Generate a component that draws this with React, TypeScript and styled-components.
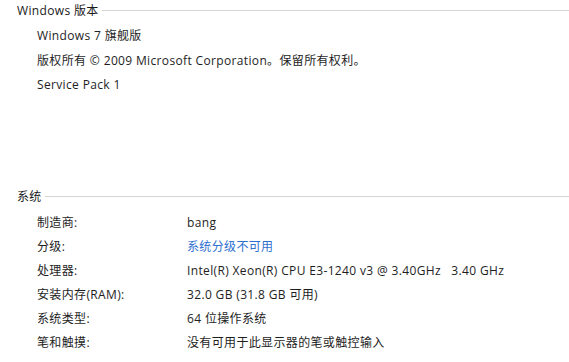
import styled, { createGlobalStyle } from "styled-components";

const Global = createGlobalStyle`
  body {
    margin: 0;
    background: #ffffff;
    font-family: "Open Sans", "Noto Sans CJK SC", sans-serif;
    font-size: 12px;
    letter-spacing: 0.35px;
    color: #1e1e1e;
  }
`;

type Item = { label?: string; value: string; link?: boolean };

const version: Item[] = [
  { value: "Windows 7 旗舰版" },
  { value: "版权所有 © 2009 Microsoft Corporation。保留所有权利。" },
  { value: "Service Pack 1" },
];

const system: Item[] = [
  { label: "制造商:", value: "bang" },
  { label: "分级:", value: "系统分级不可用", link: true },
  { label: "处理器:", value: "Intel(R) Xeon(R) CPU E3-1240 v3 @ 3.40GHz\u00a0\u00a0\u00a03.40 GHz" },
  { label: "安装内存(RAM):", value: "32.0 GB (31.8 GB 可用)" },
  { label: "系统类型:", value: "64 位操作系统" },
  { label: "笔和触摸:", value: "没有可用于此显示器的笔或触控输入" },
];

export default function App() {
  return (
    <>
      <Global />
      <Page>
        <Section>
          <Header>
            <Title>Windows 版本</Title>
            <Rule />
          </Header>
          <Rows $gap={0}>
            {version.map((it) => (
              <Row key={it.value} $h={25}>
                <Value>{it.value}</Value>
              </Row>
            ))}
          </Rows>
        </Section>
        <Section $top={89}>
          <Header>
            <Title>系统</Title>
            <Rule />
          </Header>
          <Rows $gap={2}>
            {system.map((it) => (
              <Row key={it.label} $h={24}>
                <Label>{it.label}</Label>
                <Value $link={it.link}>{it.value}</Value>
              </Row>
            ))}
          </Rows>
        </Section>
      </Page>
    </>
  );
}

const Page = styled.div`
  width: 569px;
  height: 362px;
  overflow: hidden;
  padding-left: 17px;
  box-sizing: border-box;
`;

const Section = styled.div<{ $top?: number }>`
  margin-top: ${(p) => p.$top ?? 0}px;
`;

const Header = styled.div`
  display: flex;
  align-items: center;
  height: 20px;
`;

const Title = styled.div`
  white-space: nowrap;
  color: #1a1a1a;
`;

const Rule = styled.div`
  flex: 1;
  margin-left: 3px;
  margin-top: 1px;
  border-top: 1px solid #d5d5d5;
`;

const Rows = styled.div<{ $gap: number }>`
  display: flex;
  flex-direction: column;
  margin-top: ${(p) => p.$gap + 2}px;
  padding-left: 20px;
`;

const Row = styled.div<{ $h: number }>`
  display: flex;
  align-items: center;
  height: ${(p) => p.$h}px;
`;

const Label = styled.div`
  width: 150px;
  flex-shrink: 0;
`;

const Value = styled.div<{ $link?: boolean }>`
  white-space: nowrap;
  color: ${(p) => (p.$link ? "#2e6fd0" : "#1e1e1e")};
`;
